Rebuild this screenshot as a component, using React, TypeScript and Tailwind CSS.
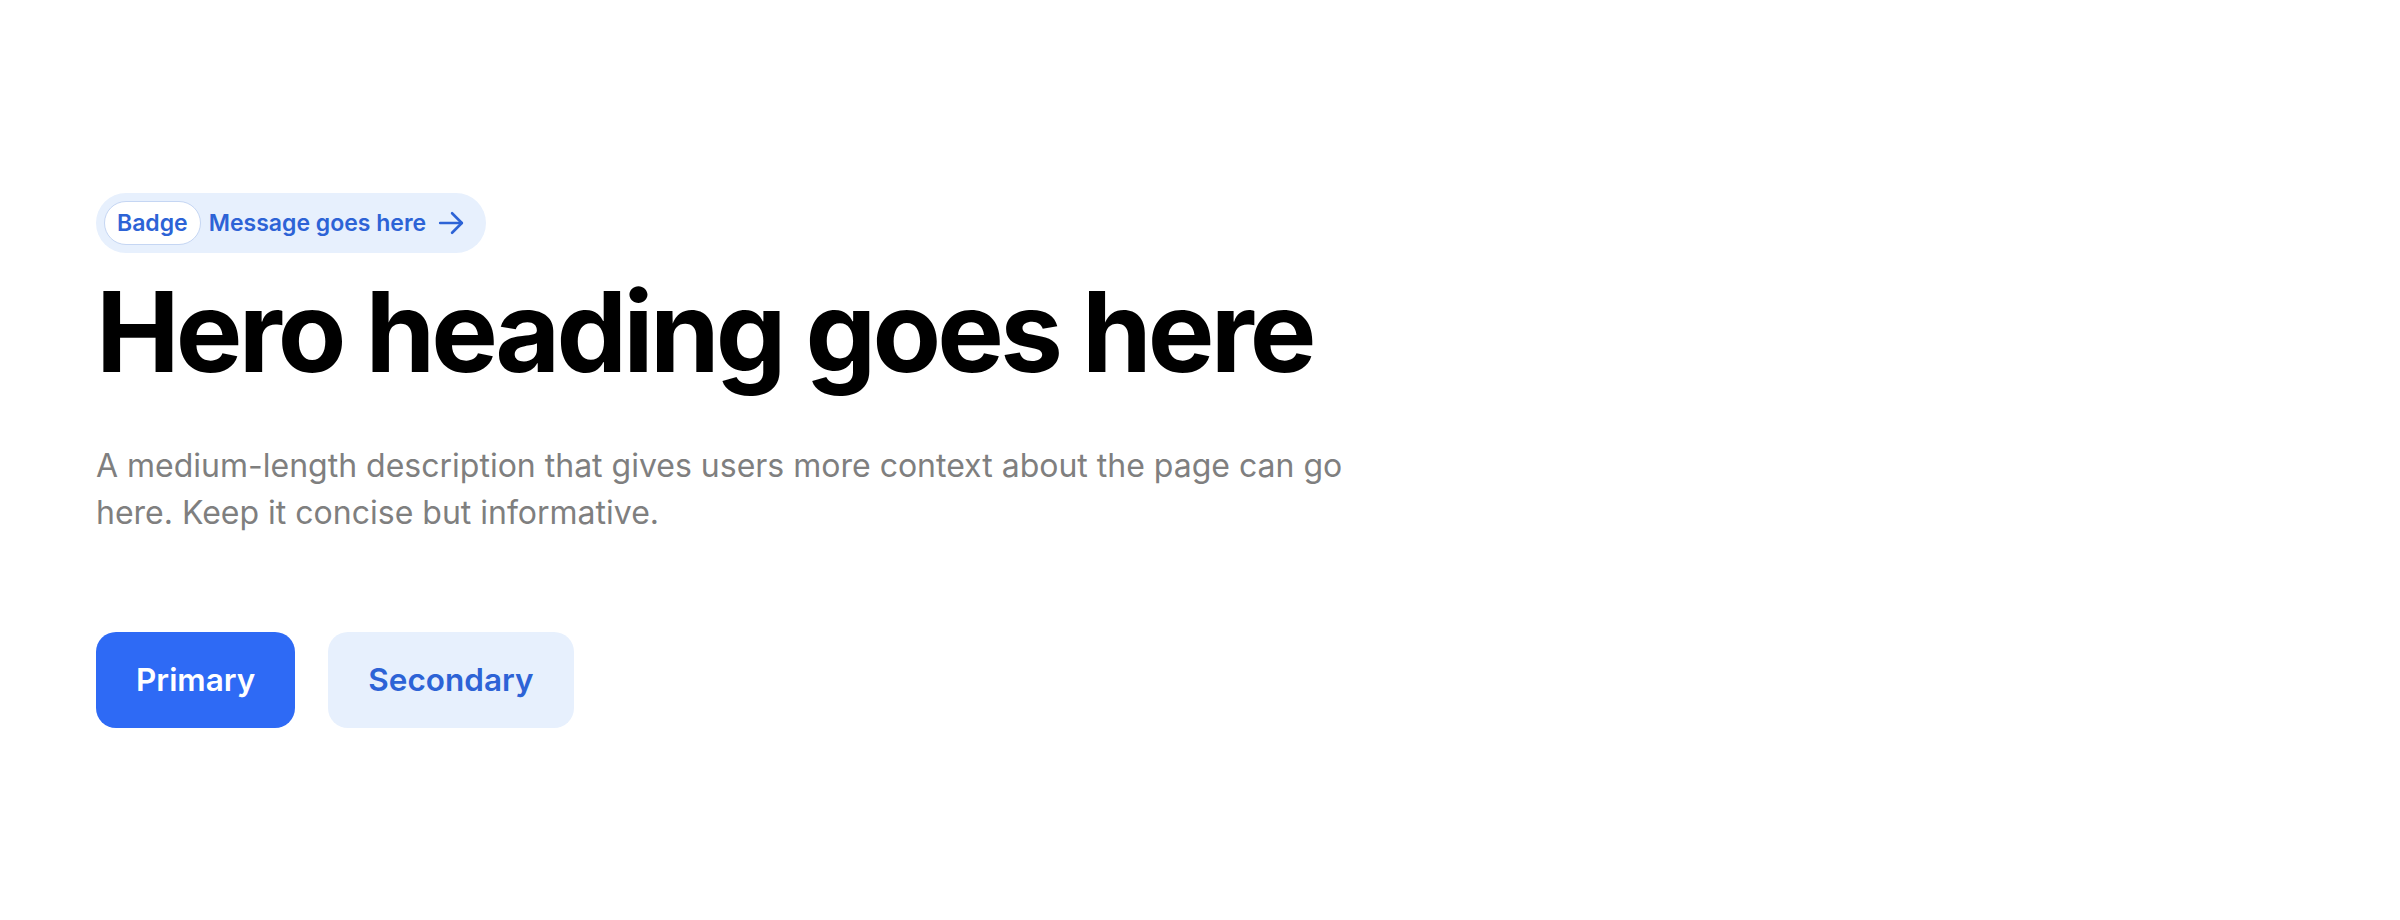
import React from "react";

export default function App() {
  return (
    <div
      className="min-h-[920px] w-[2400px] bg-white"
      style={{ fontFamily: "Inter, 'Noto Sans', sans-serif" }}
    >
      <div className="flex flex-col items-start pl-[96px] pt-[193px]">
        <div className="flex items-center gap-[8px] rounded-full bg-[#e7f0fd] py-[8px] pl-[8px] pr-[22px]">
          <span className="rounded-full border border-[#c5d6f3] bg-white px-[12px] py-[6px] text-[23px] font-semibold leading-[30px] text-[#2d63d6]">
            Badge
          </span>
          <span className="flex items-center gap-[12px] text-[23px] font-semibold leading-[30px] text-[#2d63d6]">
            Message goes here
            <svg width="26" height="26" viewBox="0 0 24 24" fill="none" stroke="currentColor" strokeWidth="2.4" strokeLinecap="round" strokeLinejoin="round">
              <path d="M2 12h20" />
              <path d="M13 3l9 9-9 9" />
            </svg>
          </span>
        </div>
        <h1 className="mt-[22px] text-[112px] font-bold leading-[112px] tracking-[-0.034em] text-black">
          Hero heading goes here
        </h1>
        <p className="mt-[55px] max-w-[1280px] text-[32px] leading-[47px] text-[#7f7f7f]">
          A medium-length description that gives users more context about the page can go here. Keep it concise but informative.
        </p>
        <div className="mt-[96px] flex gap-[33px]">
          <button className="rounded-[20px] bg-[#2e6af5] px-[40px] py-[25px] text-[31.5px] font-semibold leading-[46px] text-white">
            Primary
          </button>
          <button className="rounded-[20px] bg-[#e7f0fd] px-[40px] py-[25px] text-[31.5px] font-semibold leading-[46px] text-[#2d63d6]">
            Secondary
          </button>
        </div>
      </div>
    </div>
  );
}
